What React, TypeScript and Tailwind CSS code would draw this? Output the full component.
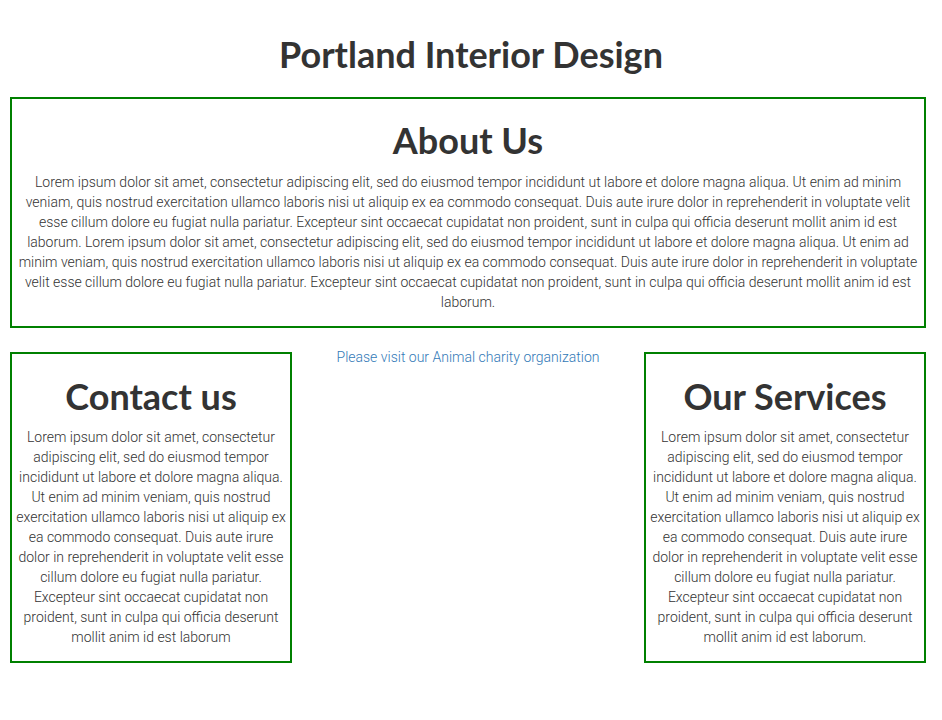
import React from "react";

const lorem2 =
  "Lorem ipsum dolor sit amet, consectetur adipiscing elit, sed do eiusmod tempor incididunt ut labore et dolore magna aliqua. Ut enim ad minim veniam, quis nostrud exercitation ullamco laboris nisi ut aliquip ex ea commodo consequat. Duis aute irure dolor in reprehenderit in voluptate velit esse cillum dolore eu fugiat nulla pariatur. Excepteur sint occaecat cupidatat non proident, sunt in culpa qui officia deserunt mollit anim id est laborum. Lorem ipsum dolor sit amet, consectetur adipiscing elit, sed do eiusmod tempor incididunt ut labore et dolore magna aliqua. Ut enim ad minim veniam, quis nostrud exercitation ullamco laboris nisi ut aliquip ex ea commodo consequat. Duis aute irure dolor in reprehenderit in voluptate velit esse cillum dolore eu fugiat nulla pariatur. Excepteur sint occaecat cupidatat non proident, sunt in culpa qui officia deserunt mollit anim id est laborum.";

const lorem1 =
  "Lorem ipsum dolor sit amet, consectetur adipiscing elit, sed do eiusmod tempor incididunt ut labore et dolore magna aliqua. Ut enim ad minim veniam, quis nostrud exercitation ullamco laboris nisi ut aliquip ex ea commodo consequat. Duis aute irure dolor in reprehenderit in voluptate velit esse cillum dolore eu fugiat nulla pariatur. Excepteur sint occaecat cupidatat non proident, sunt in culpa qui officia deserunt mollit anim id est laborum";

const lorem1Dot = lorem1 + ".";

const heading = "font-['Lato',sans-serif] font-bold text-[36px] leading-[40px] text-[#333333] text-center";
const body = "font-['Roboto',sans-serif] font-light text-[14px] leading-[20px] text-[#333333] text-center";

export default function App() {
  return (
    <div className="w-[942px] min-h-[720px] bg-white">
      <h1 className={`${heading} pt-[34px]`}>Portland Interior Design</h1>
      <section className="ml-[10px] mt-[23px] w-[916px] border-2 border-[#008000] px-[6px] pt-[21px] pb-[14px]">
        <h2 className={heading}>About Us</h2>
        <p className={`${body} mt-[12px]`}>{lorem2}</p>
      </section>
      <div className="mx-[10px] mt-[19px] flex w-[916px] items-start">
        <section className="mt-[5px] w-[282px] border-2 border-[#008000] px-[4px] pt-[22px] pb-[14px]">
          <h2 className={heading}>Contact us</h2>
          <p className={`${body} mt-[11px]`}>{lorem1}</p>
        </section>
        <div className="flex-1 text-center text-[14px] leading-[20px]">
          <a className="font-['Roboto',sans-serif] font-light text-[14px] leading-[20px] text-[#337ab7]" href="#">
            Please visit our Animal charity organization
          </a>
        </div>
        <section className="mt-[5px] w-[282px] border-2 border-[#008000] px-[4px] pt-[22px] pb-[14px]">
          <h2 className={heading}>Our Services</h2>
          <p className={`${body} mt-[11px]`}>{lorem1Dot}</p>
        </section>
      </div>
    </div>
  );
}
